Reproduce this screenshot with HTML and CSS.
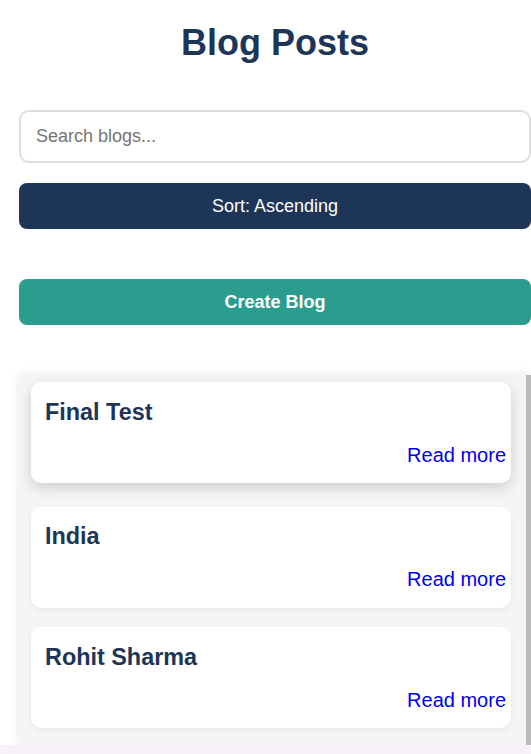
FILE: index.html
```html
<!DOCTYPE html>
<html lang="en">
<head>
<meta charset="utf-8">
<title>Blog Posts</title>
<link rel="stylesheet" href="styles.css">
</head>
<body>
<div class="page">
  <main class="main">
    <h1 class="title">Blog Posts</h1>
    <input class="search" type="text" placeholder="Search blogs...">
    <button class="btn btn-sort">Sort: Ascending</button>
    <button class="btn btn-create">Create Blog</button>
    <section class="list">
      <article class="card raised">
        <h3 class="card-title">Final Test</h3>
        <div class="card-foot"><a class="read" href="#">Read more</a></div>
      </article>
      <article class="card">
        <h3 class="card-title">India</h3>
        <div class="card-foot"><a class="read" href="#">Read more</a></div>
      </article>
      <article class="card">
        <h3 class="card-title">Rohit Sharma</h3>
        <div class="card-foot"><a class="read" href="#">Read more</a></div>
      </article>
    </section>
  </main>
  <div class="bottom-strip"></div>
</div>
</body>
</html>
```

FILE: styles.css
```css
html, body {
  margin: 0;
  padding: 0;
  background: #ffffff;
  font-family: "Liberation Sans", Arial, sans-serif;
  overflow: hidden;
}

.page {
  height: 754px;
  display: flex;
  flex-direction: column;
}

.main {
  flex: 1;
  margin-left: 19px;
  width: 512px;
  display: flex;
  flex-direction: column;
  min-height: 0;
}

.title {
  margin: 22px 0 47px;
  text-align: center;
  font-size: 36px;
  font-weight: bold;
  color: #1d3557;
  line-height: 41px;
}

.search {
  box-sizing: border-box;
  width: 100%;
  height: 53px;
  border: 2px solid #dddddd;
  border-radius: 10px;
  padding: 0 15px;
  font-family: inherit;
  font-size: 18px;
  color: #333;
  outline: none;
}

.search::placeholder {
  color: #757575;
}

.btn {
  box-sizing: border-box;
  width: 100%;
  height: 46px;
  border: none;
  border-radius: 8px;
  color: #ffffff;
  font-family: inherit;
  font-size: 18px;
  cursor: pointer;
}

.btn-sort {
  margin-top: 20px;
  background: #1d3557;
}

.btn-create {
  margin-top: 50px;
  background: #2a9d8f;
  font-weight: bold;
}

.list {
  margin-top: 50px;
  flex: 1;
  min-height: 0;
  background: #f5f5f5;
  box-shadow: 0 0 10px rgba(0, 0, 0, 0.1);
  border-right: 5px solid #bcbcbc;
  padding: 11px 15px 0 12px;
  display: flex;
  flex-direction: column;
  gap: 19.5px;
  overflow: hidden;
}

.card {
  flex: none;
  background: #ffffff;
  border-radius: 10px;
  padding: 16.5px 5px 16.5px 14px;
  box-shadow: 0 2px 5px rgba(0, 0, 0, 0.06);
}

.card.raised {
  transform: translateY(-4px);
  box-shadow: 0 5px 14px rgba(0, 0, 0, 0.16);
}

.card-title {
  margin: 0 0 19px;
  font-size: 23.4px;
  line-height: 26px;
  font-weight: bold;
  color: #1d3557;
}

.card-foot {
  display: flex;
  justify-content: flex-end;
}

.read {
  font-size: 20px;
  line-height: 23px;
  color: #0000ee;
  text-decoration: none;
}

.bottom-strip {
  height: 9px;
  background: #f8f1f8;
}
```
